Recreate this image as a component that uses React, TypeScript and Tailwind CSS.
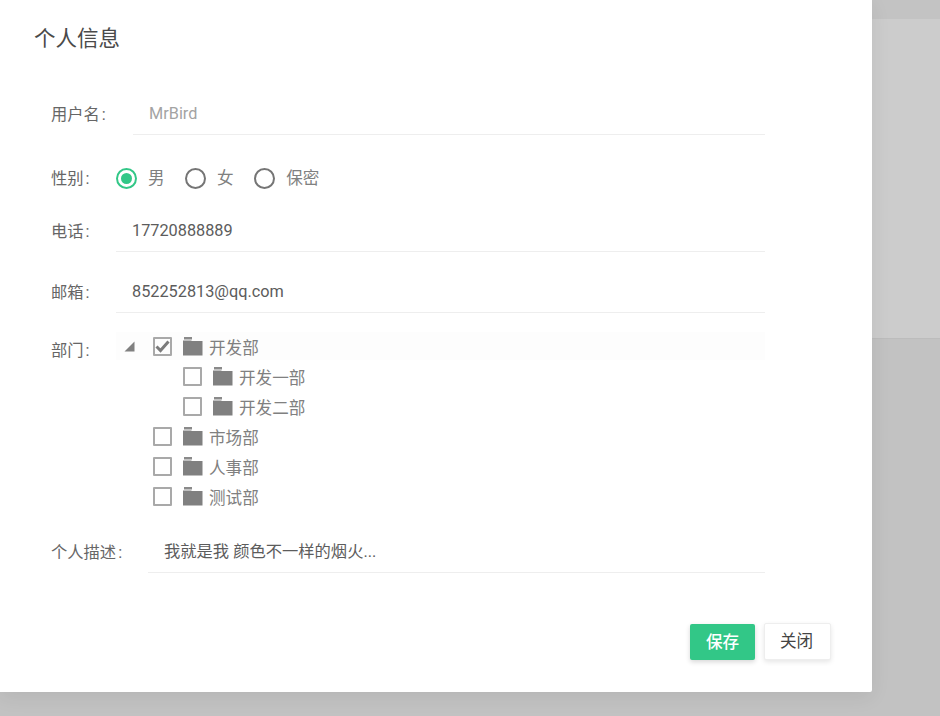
import React from 'react';

const FONT = "font-['Roboto','Noto_Sans_CJK_SC',sans-serif]";

const Folder = () => (
  <svg width="20" height="19" viewBox="0 0 20 19" className="shrink-0">
    <rect x="1" y="0" width="8" height="2.5" fill="#8a8a8a" />
    <path d="M0 3.5H8L9 4H19.5V18.5H0Z" fill="#808080" />
  </svg>
);

const Checkbox = ({ checked = false }: { checked?: boolean }) => (
  <span className="w-[19px] h-[19px] border-2 border-[#a9a9a9] rounded-[1px] shrink-0 flex items-center justify-center">
    {checked && (
      <svg width="15" height="13" viewBox="0 0 15 13">
        <path d="M1.5 6.5L5.5 10.5L13.5 1.5" fill="none" stroke="#7b7b7b" strokeWidth="3" />
      </svg>
    )}
  </span>
);

const TreeRow = ({ label, checked, indent }: { label: string; checked?: boolean; indent?: boolean }) => (
  <div className={`h-[30px] flex items-start pt-[5px] ${indent ? 'pl-[67px]' : 'pl-[37px]'}`}>
    <Checkbox checked={checked} />
    <span className="ml-[11px]"><Folder /></span>
    <span className="ml-[6px] mt-[2px] text-[16.6px] leading-[20px] text-[#808080]">{label}</span>
  </div>
);

const Radio = ({ label, active }: { label: string; active?: boolean }) => (
  <div className="flex items-center mr-[20.5px]">
    <span className={`w-[21px] h-[21px] rounded-full border-2 flex items-center justify-center ${active ? 'border-[#32c787]' : 'border-[#757575]'}`}>
      {active && <span className="w-[11px] h-[11px] rounded-full bg-[#32c787]" />}
    </span>
    <span className="ml-[11px] mt-[2px] text-[16.6px] text-[#808080]">{label}</span>
  </div>
);

const Label = ({ text, width, className }: { text: string; width: string; className: string }) => (
  <label className={`${width} shrink-0 text-[16.3px] text-[#666666] ${className}`}>
    {text}
    <span className="ml-[2px]">:</span>
  </label>
);

const Field = ({ label, value, labelWidth, muted }: { label: string; value: string; labelWidth: string; muted?: boolean }) => (
  <div className="flex items-start">
    <Label text={label} width={labelWidth} className="pt-[10px] leading-[22px]" />
    <div className={`flex-1 h-[41px] pl-4 border-b border-[#eeeeee] leading-[40px] text-[16.3px] ${muted ? 'text-[#a3a3a3]' : 'text-[#5c5c5c]'}`}>
      {value}
    </div>
  </div>
);

export default function App() {
  return (
    <div className={`relative w-[940px] h-[716px] overflow-hidden bg-[#c2c2c2] ${FONT}`}>
      {/* page behind the overlay */}
      <div className="h-[19px] bg-[#c3c3c3]" />
      <div className="h-[320px] bg-[#cccccc] border-b border-[#bcbcbc]" />

      {/* dialog */}
      <div className="absolute left-0 top-0 w-[872px] h-[692px] bg-white rounded-br-[2px] shadow-[0_5px_20px_rgba(0,0,0,0.07)]">
        <h4 className="pl-[34px] pt-[25px] text-[21.5px] leading-[28px] text-[#4a4a4a]">个人信息</h4>

        <div className="pl-[51px] w-[765px] mt-[41px]">
          <Field label="用户名" value="MrBird" labelWidth="w-[82px]" muted />

          <div className="flex items-center mt-[31px] h-[24px]">
            <Label text="性别" width="w-[65px]" className="mt-[2px]" />
            <Radio label="男" active />
            <Radio label="女" />
            <Radio label="保密" />
          </div>

          <div className="mt-[21px]">
            <Field label="电话" value="17720888889" labelWidth="w-[65px]" />
          </div>
          <div className="mt-[20px]">
            <Field label="邮箱" value="852252813@qq.com" labelWidth="w-[65px]" />
          </div>

          <div className="flex items-start mt-[19px]">
            <Label text="部门" width="w-[65px]" className="pt-[5px] leading-[28px]" />
            <div className="flex-1 relative">
              <div className="absolute left-0 top-0 right-0 h-[28px] bg-[#fdfdfd]" />
              <svg width="11" height="11" viewBox="0 0 11 11" className="absolute left-[8px] top-[9px]">
                <path d="M10.5 0.5V10.5H0.5Z" fill="#808080" />
              </svg>
              <div className="relative">
                <TreeRow label="开发部" checked />
                <TreeRow label="开发一部" indent />
                <TreeRow label="开发二部" indent />
                <TreeRow label="市场部" />
                <TreeRow label="人事部" />
                <TreeRow label="测试部" />
              </div>
            </div>
          </div>

          <div className="mt-[20px]">
            <Field label="个人描述" value="我就是我 颜色不一样的烟火..." labelWidth="w-[97px]" />
          </div>
        </div>

        <div className="flex justify-end gap-[9px] pr-[41px] mt-[51px]">
          <button className="w-[65px] h-[36px] pt-[2px] rounded-[2px] bg-[#32c787] text-white text-[16.6px] font-medium shadow-[0_2px_5px_rgba(0,0,0,0.16)]">保存</button>
          <button className="w-[67px] h-[37px] -mt-px pt-[1px] pr-[2px] rounded-[2px] bg-white border border-[#eeeeee] text-[#444444] text-[16.6px] shadow-[0_2px_5px_rgba(0,0,0,0.1)]">关闭</button>
        </div>
      </div>
    </div>
  );
}
